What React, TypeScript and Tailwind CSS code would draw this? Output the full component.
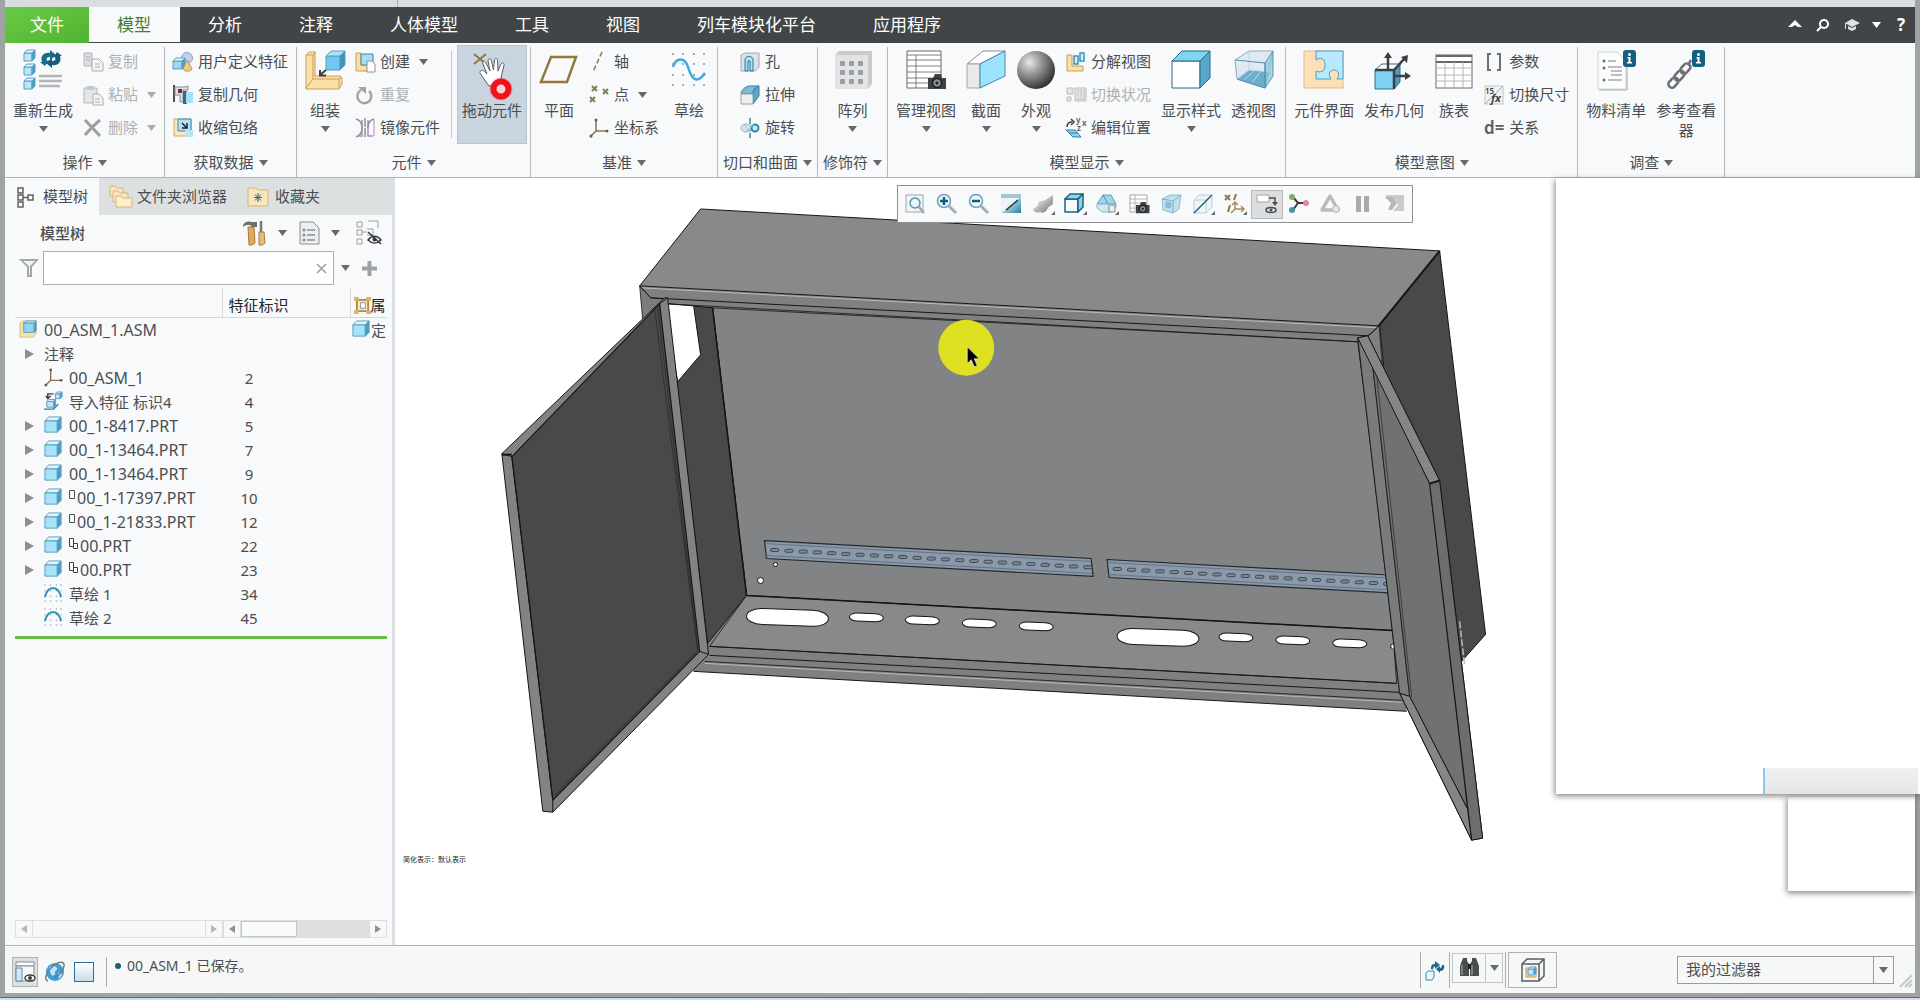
import type { ReactNode } from "react";
import clsx from "clsx";

/* ---------- small drawing helpers ---------- */

interface IconProps {
  size?: number;
  box?: number;
  children: ReactNode;
}

function Icon({ size = 20, box = size, children }: IconProps) {
  return (
    <svg
      width={size}
      height={size}
      viewBox={`0 0 ${box} ${box}`}
      fill="none"
      className="block shrink-0 overflow-visible"
      aria-hidden="true"
    >
      {children}
    </svg>
  );
}

interface CubeProps {
  x: number;
  y: number;
  w: number;
  h: number;
  d: number;
  front?: string;
  top?: string;
  side?: string;
  stroke?: string;
}

function Cube({
  x,
  y,
  w,
  h,
  d,
  front = "#b9e8fb",
  top = "#e3f6fd",
  side = "#4f9cc4",
  stroke = "#5a9dbf",
}: CubeProps) {
  return (
    <g stroke={stroke} strokeLinejoin="round">
      <path d={`M${x} ${y + d}h${w - d}v${h - d}h${d - w}z`} fill={front} />
      <path d={`M${x} ${y + d}l${d} ${-d}h${w - d}l${-d} ${d}z`} fill={top} />
      <path d={`M${x + w - d} ${y + d}l${d} ${-d}v${h - d}l${-d} ${d}z`} fill={side} />
    </g>
  );
}

function Caret({ className = "text-[#666a6d]" }: { className?: string }) {
  return (
    <svg width="9" height="6" viewBox="0 0 9 6" className={clsx("shrink-0", className)} aria-hidden="true">
      <path d="M0 0h9L4.500 6z" fill="currentColor" />
    </svg>
  );
}

function InfoBadge({ x }: { x: number }) {
  return (
    <g>
      <rect x={x} y="0" width="13" height="17" rx="3" fill="#136080" />
      <path d="M5 7h3v5h1.500v1.500h-5V12H6V8.500H5z" transform={`translate(${x - 0.5} 0)`} fill="#fff" />
      <circle cx={x + 6.5} cy="4.500" r="1.500" fill="#fff" />
    </g>
  );
}

function Camera({ x, y }: { x: number; y: number }) {
  return (
    <g transform={`translate(${x} ${y})`}>
      <path d="M0 4h5l2-4h6l1 4h4v11H0z" fill="#3f4245" />
      <circle cx="9" cy="9" r="4.500" fill="#8a8d90" stroke="#1c1d1f" strokeWidth="1.500" />
      <circle cx="9" cy="9" r="1.500" fill="#222" />
    </g>
  );
}

/* ---------- large ribbon icons, 40 px box ---------- */

const large = {
  regenerate: (
    <>
      <Cube x={1} y={0} w={11} h={11} d={3} />
      <Cube x={1} y={14} w={11} h={11} d={3} />
      <Cube x={1} y={28} w={11} h={11} d={3} />
      <path d="M19 12c-2-6 2-10 8-9V0l6 5-6 5V7c-3 0-4 1-3 4l2-1-4 6-5-4z" fill="#1c6a8b" />
      <path d="M37 6c2 6-2 10-8 9v3l-6-5 6-5v3c3 0 4-1 3-4l-2 1 4-6 5 4z" fill="#135c7e" />
      <path d="M16 26h23M16 31h23M16 36h21" stroke="#b2b5b7" strokeWidth="2.500" />
    </>
  ),
  assemble: (
    <>
      <path d="M1 5l3-3h6v24h25l2 2v6l-3 5H1z" fill="#fbe0a6" stroke="#c69f57" />
      <path d="M1 5h7v24l-7 9M8 29h26l3-2M8 5l3-3M34 29v9" stroke="#c69f57" />
      <Cube x={21} y={1} w={19} h={19} d={5} front="#6fc8ef" top="#a9e2f8" side="#3f94bf" />
      <path d="M21 20l-6 5m0-5v5.500h6" stroke="#3d4144" strokeWidth="2" />
    </>
  ),
  drag: (
    <>
      <path d="M2 4l12 10M14 4L2 14" stroke="#8b7a3f" strokeWidth="2" />
      <path
        d="M17 36l-7-10c-2-3-3-4-1-5 2-2 4 1 6 3L11 14c-1-3 2-4 3-1l4 8-2-10c0-3 3-3 3.500 0l2 9 1-10c0-2 3-2 3 0l.500 11 3-7c1-2 4-1 3 1l-3 13-2 8z"
        fill="#fff"
        stroke="#5a5d60"
      />
      <circle cx="29" cy="39" r="7.500" fill="#f4d4d4" stroke="#f3101c" strokeWidth="6" />
      <circle cx="29" cy="39" r="11" stroke="#f3101c" strokeOpacity=".35" />
    </>
  ),
  plane: <path d="M12 7h25l-9 25H2z" stroke="#94793f" strokeWidth="2.500" />,
  sketch: (
    <>
      {[4, 14, 25, 35].map((y) =>
        [4, 14, 25, 35].map((x) => <circle key={`${x}-${y}`} cx={x} cy={y} r="1" fill="#8e9296" />),
      )}
      <path d="M4 17c3-10 12-10 15 0s8 19 17 6" stroke="#3fa9e0" strokeWidth="2.500" />
    </>
  ),
  pattern: (
    <>
      <path d="M2 5l4-4h33v33l-4 5H2z" fill="#c9cbcd" />
      <rect x="2" y="5" width="33" height="34" rx="1" fill="#e3e4e5" />
      {[11, 20, 29].map((y) =>
        [7, 16, 25].map((x) => <rect key={`${x}-${y}`} x={x} y={y} width="5" height="5" rx="1" fill="#9b9ea1" />),
      )}
    </>
  ),
  manageViews: (
    <>
      <path d="M1 1h34v37H1z" fill="#fff" stroke="#66696c" />
      <path d="M1 5h34M1 10h34M1 16h34M1 22h34M1 28h34M1 33h34M10 5v33" stroke="#7b7e81" />
      <Camera x={22} y={24} />
    </>
  ),
  section: (
    <>
      <path d="M1 14L17 1h22L14 14z" fill="#fff" stroke="#8a8d90" />
      <path d="M1 14h13v24H1z" fill="#e9eaeb" stroke="#a2a5a8" />
      <path d="M14 14L39 1v25L14 38z" fill="#9be4fb" stroke="#4387a6" />
    </>
  ),
  appearance: (
    <>
      <radialGradient id="ball" cx=".33" cy=".3" r=".75">
        <stop offset="0" stopColor="#e8e8e8" />
        <stop offset=".4" stopColor="#9a9b9c" />
        <stop offset="1" stopColor="#2d2e2f" />
      </radialGradient>
      <circle cx="20" cy="20" r="19" fill="url(#ball)" />
    </>
  ),
  displayStyle: <Cube x={1} y={1} w={38} h={37} d={10} front="#fff" top="#7fd6f3" side="#5aa7cb" stroke="#256a88" />,
  perspective: (
    <>
      <path d="M1 10L15 1h24l-8 37-28-9z" fill="#dfe9f1" stroke="#8fa9b8" />
      <path d="M3 29l12-9 21 2-5 16z" fill="#6aaecb" />
      <path d="M15 1v19M3 29l12-9 22 2M10 30l10-9M18 33l8-11" stroke="#bcd8e5" />
      <path d="M31 13l8-12v25l-8 12z" fill="#8dc3da" fillOpacity=".7" stroke="#4f93b0" />
      <path d="M1 10l30 3M31 13v25M3 29l28 9" stroke="#4f93b0" />
    </>
  ),
  interface: (
    <>
      <rect x="0" y="1" width="39" height="37" fill="#fde0b8" stroke="#e0b989" />
      <path
        d="M12 1h27v28h-6c3-4 2-9-3-9s-6 5-3 9H12V21c4 2 9 1 9-6s-5-8-9-5z"
        fill="#b8e9fd"
        stroke="#4e9cc2"
      />
    </>
  ),
  publish: (
    <>
      <path d="M1 20l7-6h19l-6 6z" fill="#fff" stroke="#2d6f8e" />
      <path d="M20 20l6-6v18l-6 7z" fill="#4c9cc0" stroke="#2d6f8e" />
      <path d="M1 20h19v19H1z" fill="#7fd1f2" stroke="#2d6f8e" />
      <path d="M1 20h19v19M14 20V5M20 20L31 8M20 26h13" stroke="#3c4043" strokeWidth="2.500" />
      <path d="M14 2l4 6h-8zM34 5l-1 8-6-6zM37 26l-6 4v-8z" fill="#3c4043" />
    </>
  ),
  familyTable: (
    <>
      <rect x="2" y="5" width="36" height="33" fill="#fff" stroke="#66696c" />
      <path d="M2 6h36M2 12h36" stroke="#66696c" strokeWidth="2" />
      <path d="M2 18h36M2 25h36M2 31h36M11 12v26M20 12v26M29 12v26" stroke="#b3b5b7" />
    </>
  ),
  bom: (
    <>
      <path d="M2 2h19l9 9v28H2z" fill="#fcfcfc" stroke="#d0d2d4" />
      <path d="M3 40h28V13" stroke="#a9abad" />
      <path d="M12 11h8M12 17h14M15 21h11M15 25h11M12 30h14" stroke="#a6a8aa" strokeWidth="1.500" />
      <circle cx="8" cy="11" r="1.500" fill="#3d7f96" />
      <circle cx="8" cy="18" r="1.500" fill="#3d7f96" />
      <circle cx="8" cy="30" r="1.500" fill="#3d7f96" />
      <InfoBadge x={27} />
    </>
  ),
  references: (
    <>
      <g stroke="#6d7073" strokeWidth="2.500">
        <rect x="-5" y="-3.500" width="11" height="7" rx="3" transform="translate(7 33) rotate(-48)" />
        <rect x="-5" y="-3.500" width="11" height="7" rx="3" transform="translate(13 26) rotate(-48)" />
        <rect x="-5" y="-3.500" width="11" height="7" rx="3" transform="translate(19 19) rotate(-48)" />
        <path d="M22 15l3-5" />
      </g>
      <InfoBadge x={26} />
    </>
  ),
};

/* ---------- small ribbon and tree icons, 20 px box ---------- */

const part = <Cube x={1} y={1} w={17} h={16} d={4} front="#a5e3fb" top="#dff5fd" side="#4b9dc6" />;
const csys = (
  <>
    <path d="M7 2v11h12M7 13l-6 6" stroke="#8a7350" strokeWidth="1.500" />
    <circle cx="7" cy="2" r="1.500" fill="#5d5f61" />
    <circle cx="18" cy="13" r="1.500" fill="#5d5f61" />
    <circle cx="2" cy="18" r="1.500" fill="#5d5f61" />
  </>
);

const small = {
  copy: (
    <>
      <path d="M1 1h8v13H1z" fill="#dcdee0" stroke="#b4b7ba" />
      <path d="M9 7h7l4 4v8H9z" fill="#f3f4f5" stroke="#a9acaf" />
      <path d="M12 12h5M12 15h5M3 5h4M3 8h4" stroke="#a9acaf" />
    </>
  ),
  paste: (
    <>
      <path d="M1 3h13v15H1z" fill="#e3e5e6" stroke="#b4b7ba" />
      <path d="M4 1h7v4H4z" fill="#c5c8ca" />
      <path d="M10 9h6l4 4v7H10z" fill="#f3f4f5" stroke="#a9acaf" />
      <path d="M12 14h5M12 17h5" stroke="#a9acaf" />
    </>
  ),
  remove: <path d="M2 2l15 16M17 2C11 7 6 12 2 17" stroke="#9d9fa1" strokeWidth="3" />,
  userFeature: (
    <>
      <circle cx="14" cy="6" r="5.500" fill="#c3d0e6" stroke="#8c9fc4" />
      <Cube x={0} y={6} w={12} h={11} d={3} front="#9bdaf5" />
      <path d="M14 8l5 9c-2 3-7 3-9 0z" fill="#ecca8d" stroke="#b99353" />
    </>
  ),
  copyGeom: (
    <>
      <path d="M1 0v17" stroke="#4d5053" strokeWidth="2" />
      <path d="M2 2h10l3-1v4h-5v12H7V10H2z" fill="#dfe1e3" stroke="#8a8d90" />
      <path d="M5 4h4v4H5z" fill="#6d2f35" />
      <path d="M10 6h4v13h-4z" fill="#1f7396" />
      <path d="M13 7h7v11h-7z" fill="#a6e1fa" />
    </>
  ),
  shrinkwrap: (
    <>
      <path d="M1 1h17v17H1z" fill="#fbe6bb" stroke="#cfa962" />
      <path d="M5 1h13v12H5z" fill="#b4e0f1" stroke="#3c86a8" />
      <path d="M9 5l5 5m0-5v5H9" stroke="#222" strokeWidth="1.500" />
      <path d="M12 12h8v7h-8z" fill="#b5e6fa" />
    </>
  ),
  create: (
    <>
      <path d="M1 1h5v12h11v6H1z" fill="#fbe0a6" stroke="#c69f57" />
      <path d="M6 2h12v11H6z" fill="#a9def3" stroke="#3c86a8" />
      <path d="M12 9h5l3 3v8h-8z" fill="#fff" stroke="#8e9194" />
    </>
  ),
  repeat: (
    <>
      <path d="M6 5a7 7 0 1 0 8 1" stroke="#a2a4a6" strokeWidth="2.500" />
      <path d="M3 2h8v7z" fill="#a2a4a6" />
    </>
  ),
  mirror: (
    <>
      <path d="M10 0v20" stroke="#5a5d60" strokeDasharray="9 1" />
      <path d="M1 1c4 1 6 5 6 9s-1 7-6 9" stroke="#8d9094" strokeWidth="1.500" />
      <path d="M7 2v16H2M13 2v16h5" stroke="#a98dbf" strokeWidth="1.500" />
      <path d="M19 1c-4 1-6 5-6 9" stroke="#8d9094" strokeWidth="1.500" />
      <path d="M19 2v16" stroke="#a98dbf" />
    </>
  ),
  axis: <path d="M13 0L4 20" stroke="#8a7a45" strokeWidth="1.500" strokeDasharray="5 2.500" />,
  points: (
    <path
      d="M3 1l5 5m0-5L3 6M14 4l5 5m0-5l-5 5M1 12l5 5m0-5l-5 5"
      stroke="#8a7a55"
      strokeWidth="2"
    />
  ),
  csys,
  hole: (
    <>
      <path d="M1 3l4-2h14v14l-4 4H1z" fill="#dfe2e4" stroke="#a4a7aa" />
      <path d="M5 19V8c0-5 8-5 8 0v11h-3V9H8v10z" fill="#a5dff5" stroke="#27799c" />
    </>
  ),
  extrude: (
    <>
      <path d="M1 9c1-5 4-7 8-8h10c-4 1-6 4-6 8z" fill="#7dbdd6" stroke="#3a7f9d" />
      <path d="M13 9c0-4 2-7 6-8v10l-6 8z" fill="#57a9cb" stroke="#3a7f9d" />
      <path d="M1 9h12v10H1z" fill="#eceeef" stroke="#9b9ea1" />
    </>
  ),
  revolve: (
    <>
      <path d="M10 0v20" stroke="#2f89ad" strokeWidth="1.500" strokeDasharray="6 1.500" />
      <ellipse cx="6" cy="10" rx="5" ry="4" fill="#dbe3e7" stroke="#9bb3be" />
      <circle cx="15" cy="10" r="3.500" fill="#c3e9f7" stroke="#2f89ad" strokeWidth="2" />
      <path d="M4 6l5 8M6 14l8-8" stroke="#8fc6dc" />
    </>
  ),
  explode: (
    <>
      <path d="M1 3h5v11h11v5H1z" fill="#fbe0a6" stroke="#c69f57" />
      <path d="M8 4h4v8H8zM14 1h4v8h-4z" fill="#d5f0fb" stroke="#3c93bf" strokeWidth="1.500" />
    </>
  ),
  toggleStatus: (
    <>
      <path d="M1 3h6v6H1zM1 12h4v4H1zM9 3h11v13H9z" fill="#e4e5e6" stroke="#bbbdbf" />
      <path d="M12 4v8M15 4v8M18 4v11M10 14h8" stroke="#bbbdbf" />
    </>
  ),
  editPosition: (
    <>
      <path d="M0 12h9l6 7H7z" fill="#8fd4f0" stroke="#2f7ea1" />
      <path d="M3 15h9" stroke="#2f7ea1" />
      <path d="M1 9c0-4 2-5 5-5M5 1l3 3-3 3" stroke="#3c4043" strokeWidth="1.500" />
      <text x="10" y="5" fontSize="8" fontWeight="600" fill="#55585b">y</text>
      <text x="16" y="8" fontSize="8" fontWeight="600" fill="#55585b">x</text>
      <text x="11" y="13" fontSize="8" fontWeight="600" fill="#55585b">z</text>
    </>
  ),
  params: <path d="M7 2H4v16h3M13 2h3v16h-3" stroke="#6d7073" strokeWidth="2" />,
  switchDims: (
    <>
      <path d="M1 1h18v18H1z" fill="#f1f2f2" stroke="#c4c6c8" />
      <path d="M1 19L19 1" stroke="#a5a8aa" />
      <text x="1" y="9" fontSize="8" fontWeight="600" fill="#3c4043">15</text>
      <text x="7" y="17" fontSize="11" fontStyle="italic" fontWeight="700" fill="#3c4043">fx</text>
    </>
  ),
  relations: (
    <text x="0" y="16" fontSize="17" fontWeight="600" fill="#5a5d60">d=</text>
  ),
  part,
  assembly: (
    <>
      <path d="M1 3l3-2h14v13l-3 4H1z" fill="#fbe0a6" stroke="#d9bd85" />
      <Cube x={5} y={1} w={13} h={12} d={2} front="#8fd4f0" />
    </>
  ),
  importFeature: (
    <>
      <Cube x={12} y={0} w={7} h={7} d={2} />
      <path d="M0 18h10l5-5" stroke="#2f7ea1" strokeWidth="1.500" />
      <Cube x={3} y={8} w={9} h={8} d={2} />
      <path d="M4 6V2h6M2 4l2 3 3-3" stroke="#3c4043" strokeWidth="1.500" />
    </>
  ),
  sketchArc: (
    <>
      {[1, 7, 13, 18].map((y) =>
        [1, 7, 13, 18].map((x) => <circle key={`${x}-${y}`} cx={x} cy={y} r=".8" fill="#a3a6a9" />),
      )}
      <path d="M1 14c3-13 14-13 17 0" stroke="#2e93b8" strokeWidth="2" />
    </>
  ),
};

/* ---------- graphics toolbar icons, 22 px box ---------- */

const corner = <path d="M23 18v4h-4z" fill="#666" />;

const view: { name: string; icon: ReactNode; active?: boolean; disabled?: boolean }[] = [
  {
    name: "重新调整",
    icon: (
      <>
        <path d="M2 2h17v17H2z" fill="#f1f5f7" stroke="#a3a6a9" />
        <circle cx="11" cy="10" r="5" fill="#e9f6fc" stroke="#5595ae" strokeWidth="1.500" />
        <path d="M15 14l5 6" stroke="#a3a6a9" strokeWidth="2.500" />
      </>
    ),
  },
  {
    name: "放大",
    icon: (
      <>
        <circle cx="8" cy="8" r="6.500" fill="#eef8fc" stroke="#6ea3b8" strokeWidth="1.500" />
        <path d="M8 4v8M4 8h8" stroke="#125c7c" strokeWidth="2.500" />
        <path d="M13 13l7 7" stroke="#a9acae" strokeWidth="3" />
      </>
    ),
  },
  {
    name: "缩小",
    icon: (
      <>
        <circle cx="8" cy="8" r="6.500" fill="#eef8fc" stroke="#6ea3b8" strokeWidth="1.500" />
        <path d="M4 8h8" stroke="#125c7c" strokeWidth="2.500" />
        <path d="M13 13l7 7" stroke="#a9acae" strokeWidth="3" />
      </>
    ),
  },
  {
    name: "重画",
    icon: (
      <>
        <linearGradient id="repaint" x1="0" y1="0" x2="1" y2="1">
          <stop offset=".4" stopColor="#bcdde6" />
          <stop offset="1" stopColor="#23809f" />
        </linearGradient>
        <path d="M1 1h20v19H1z" fill="#eef2f4" />
        <path d="M1 1h20v4H1z" fill="#a4c6d0" />
        <path d="M1 20h20V3L10 14z" fill="url(#repaint)" />
        <path d="M6 17L18 7" stroke="#123a4a" strokeWidth="1.500" />
      </>
    ),
  },
  {
    name: "渲染选项",
    icon: (
      <>
        <linearGradient id="shade" x1="0" y1="0" x2="1" y2="1">
          <stop offset=".2" stopColor="#e3e4e5" />
          <stop offset="1" stopColor="#6d7073" />
        </linearGradient>
        <path d="M1 16c1-2 4-1 5-4 0-3 2-5 5-4 3-1 6-4 10-6v8c-1 3-4 3-5 5-2 4-5 6-8 4-3 1-6 1-7-3z" fill="url(#shade)" />
        {corner}
      </>
    ),
  },
  {
    name: "显示样式",
    icon: (
      <>
        <g strokeWidth="1.500">
          <Cube x={1} y={1} w={18} h={18} d={5} front="#f6fafc" top="#8fd8f2" side="#8fd0e8" stroke="#1b6480" />
        </g>
        {corner}
      </>
    ),
  },
  {
    name: "已保存方向",
    icon: (
      <>
        <path d="M1 11l6-9h8l5 9z" fill="#9fd5ea" stroke="#5b9cb8" />
        <path d="M1 11h19v3l-5 5H6l-5-4z" fill="#cfe8f2" stroke="#86b6ca" />
        <path d="M7 2l5 9" stroke="#4b8ca8" />
        <path d="M13 12h6v7h-6z" fill="#eee" stroke="#888" />
        {corner}
      </>
    ),
  },
  {
    name: "视图管理器",
    icon: (
      <>
        <path d="M2 2h17v17H2z" fill="#fff" stroke="#a3a6a9" />
        <path d="M2 6h17M2 10h17M2 15h17M7 2v17" stroke="#b3b6b8" />
        <g transform="translate(8 9) scale(.75)">
          <Camera x={0} y={0} />
        </g>
      </>
    ),
  },
  {
    name: "透视图",
    icon: (
      <>
        <path d="M2 6l8-4h11l-2 14-6 4-10-3z" fill="#bfdfec" stroke="#8fbdcf" />
        <path d="M2 6l11 2 8-6M13 8v12" stroke="#7fb2c8" />
        <path d="M6 9l5 1-1 5-4-1z" fill="#8fc3d8" stroke="#7fb2c8" />
      </>
    ),
  },
  {
    name: "截面",
    icon: (
      <>
        <path d="M2 7l5-5h13v12l-6 6H2z" fill="#eef5f9" stroke="#b8cfda" />
        <path d="M2 7h12v13M14 7l6-5" stroke="#b8cfda" />
        <path d="M2 20L20 2" stroke="#2b5f7a" strokeWidth="1.500" />
        {corner}
      </>
    ),
  },
  {
    name: "基准显示过滤器",
    icon: (
      <>
        <path d="M1 2l5 5m0-5L1 7M12 1l-2 6M6 12l-2 7" stroke="#8a7a3f" strokeWidth="2" />
        <path d="M11 9v7h9M11 16l-4 4M8 12l3-3 3 3M17 13l3 3-3 3" stroke="#a68c58" strokeWidth="1.500" />
        {corner}
      </>
    ),
  },
  {
    name: "注释显示",
    active: true,
    icon: (
      <>
        <path d="M1 2h12v7H1z" fill="#fff" stroke="#a0a3a5" />
        <path d="M13 5h6v5" stroke="#4a4d50" strokeWidth="1.500" />
        <path d="M16 9h6l-3 4z" fill="#4a4d50" />
        <ellipse cx="15" cy="17" rx="5" ry="2.500" stroke="#4a4d50" strokeWidth="1.500" />
        <circle cx="15" cy="17" r="1.500" fill="#4a4d50" />
      </>
    ),
  },
  {
    name: "旋转中心",
    icon: (
      <>
        <path d="M10 10L5 4M10 10h8M10 10l-5 7" stroke="#3a3d40" strokeWidth="2" />
        <circle cx="4" cy="4" r="3" fill="#7fae6c" />
        <circle cx="18" cy="10" r="3" fill="#e58a8f" />
        <circle cx="4" cy="17" r="3" fill="#4c93a6" />
      </>
    ),
  },
  {
    name: "仿真",
    disabled: true,
    icon: (
      <>
        <path d="M10 3l8 14H2z" stroke="#b9bbbd" strokeWidth="3.500" strokeLinejoin="round" />
        <circle cx="16" cy="16" r="3.500" fill="#e3e4e5" stroke="#b3b5b7" />
      </>
    ),
  },
  { name: "暂停", disabled: true, icon: <path d="M4 3h5v16H4zM12 3h5v16h-5z" fill="#a9abad" /> },
  {
    name: "继续",
    disabled: true,
    icon: (
      <>
        <path d="M2 2h18v16H9l5-6-3-6H2z" fill="#c9cbcd" />
        <path d="M1 4h8l4 6-5 7H4l3-7z" fill="#b5b7b9" />
      </>
    ),
  },
];

/* ---------- ribbon ---------- */

interface BigButtonProps {
  icon: ReactNode;
  label: string;
  caret?: boolean;
  active?: boolean;
}

function BigButton({ icon, label, caret, active }: BigButtonProps) {
  return (
    <button
      type="button"
      className={clsx(
        "flex h-[99px] shrink-0 flex-col items-center px-[5px] pt-[5px]",
        active && "bg-[#c8d5e0] shadow-[inset_0_0_0_1px_#b5c5d3]",
      )}
    >
      <Icon size={40}>{icon}</Icon>
      <span className="mt-2.5 max-w-[60px] text-[15px] leading-5">{label}</span>
      {caret && <Caret className="mt-1.5 text-[#666a6d]" />}
    </button>
  );
}

interface SmallButtonProps {
  icon: ReactNode;
  label: string;
  caret?: boolean;
  disabled?: boolean;
}

function SmallButton({ icon, label, caret, disabled }: SmallButtonProps) {
  return (
    <button
      type="button"
      disabled={disabled}
      className={clsx("flex h-[33px] items-center gap-[5px] px-[5px]", disabled && "text-[#adb0b3]")}
    >
      <Icon>{icon}</Icon>
      <span className="text-[15px] whitespace-nowrap">{label}</span>
      {caret && <Caret className={disabled ? "ml-1 text-[#a9acaf]" : "ml-1 text-[#666a6d]"} />}
    </button>
  );
}

function Column({ children }: { children: ReactNode }) {
  return <div className="flex shrink-0 flex-col items-start">{children}</div>;
}

function Group({ label, children }: { label: string; children: ReactNode }) {
  return (
    <section className="flex shrink-0">
      <div className="flex flex-col items-center px-[3px] pt-0.5">
        <div className="flex">{children}</div>
        <button type="button" className="mt-1 flex h-[29px] items-center gap-[5px] px-0.5 text-[15px]">
          {label}
          <Caret />
        </button>
      </div>
      <div className="mt-1 w-px bg-[#b5b7b9]" />
    </section>
  );
}

function Ribbon() {
  return (
    <div className="flex h-[135px] shrink-0 overflow-hidden border-b border-[#b3b6b8] bg-[#f8f9fb]">
      <Group label="操作">
        <BigButton icon={large.regenerate} label="重新生成" caret />
        <Column>
          <SmallButton icon={small.copy} label="复制" disabled />
          <SmallButton icon={small.paste} label="粘贴" caret disabled />
          <SmallButton icon={small.remove} label="删除" caret disabled />
        </Column>
      </Group>
      <Group label="获取数据">
        <Column>
          <SmallButton icon={small.userFeature} label="用户定义特征" />
          <SmallButton icon={small.copyGeom} label="复制几何" />
          <SmallButton icon={small.shrinkwrap} label="收缩包络" />
        </Column>
      </Group>
      <Group label="元件">
        <BigButton icon={large.assemble} label="组装" caret />
        <Column>
          <SmallButton icon={small.create} label="创建" caret />
          <SmallButton icon={small.repeat} label="重复" disabled />
          <SmallButton icon={small.mirror} label="镜像元件" />
        </Column>
        <div className="my-1.5 mr-[5px] ml-1.5 w-px bg-[#c3c5c7]" />
        <BigButton icon={large.drag} label="拖动元件" active />
      </Group>
      <Group label="基准">
        <BigButton icon={large.plane} label="平面" />
        <Column>
          <SmallButton icon={small.axis} label="轴" />
          <SmallButton icon={small.points} label="点" caret />
          <SmallButton icon={small.csys} label="坐标系" />
        </Column>
        <BigButton icon={large.sketch} label="草绘" />
      </Group>
      <Group label="切口和曲面">
        <Column>
          <SmallButton icon={small.hole} label="孔" />
          <SmallButton icon={small.extrude} label="拉伸" />
          <SmallButton icon={small.revolve} label="旋转" />
        </Column>
      </Group>
      <Group label="修饰符">
        <div className="px-1">
          <BigButton icon={large.pattern} label="阵列" caret />
        </div>
      </Group>
      <Group label="模型显示">
        <BigButton icon={large.manageViews} label="管理视图" caret />
        <BigButton icon={large.section} label="截面" caret />
        <BigButton icon={large.appearance} label="外观" caret />
        <Column>
          <SmallButton icon={small.explode} label="分解视图" />
          <SmallButton icon={small.toggleStatus} label="切换状况" disabled />
          <SmallButton icon={small.editPosition} label="编辑位置" />
        </Column>
        <BigButton icon={large.displayStyle} label="显示样式" caret />
        <div className="pr-px">
          <BigButton icon={large.perspective} label="透视图" />
        </div>
      </Group>
      <Group label="模型意图">
        <BigButton icon={large.interface} label="元件界面" />
        <BigButton icon={large.publish} label="发布几何" />
        <BigButton icon={large.familyTable} label="族表" />
        <Column>
          <SmallButton icon={small.params} label="参数" />
          <SmallButton icon={small.switchDims} label="切换尺寸" />
          <SmallButton icon={small.relations} label="关系" />
        </Column>
      </Group>
      <Group label="调查">
        <BigButton icon={large.bom} label="物料清单" />
        <BigButton icon={large.references} label="参考查看器" />
      </Group>
    </div>
  );
}

const tabs = ["分析", "注释", "人体模型", "工具", "视图", "列车模块化平台", "应用程序"];

function TabBar() {
  return (
    <nav className="flex h-9 shrink-0 items-stretch bg-[#414548] text-[17px] text-white">
      <button type="button" className="bg-linear-to-br from-[#68cb43] to-[#52b233] px-[25px]">
        文件
      </button>
      <button type="button" className="mb-px bg-[#f8f9fb] pr-[29px] pl-7 text-[#44802a]">
        模型
      </button>
      <div className="flex gap-px">
        {tabs.map((tab) => (
          <button key={tab} type="button" className="px-7">
            {tab}
          </button>
        ))}
      </div>
      <div className="ml-auto flex items-center gap-3.5 pr-2">
        <button type="button" aria-label="最小化功能区">
          <Icon size={14}>
            <path d="M0 9l7-7 7 7h-4L7 7 4 9z" fill="#fff" />
          </Icon>
        </button>
        <button type="button" aria-label="搜索">
          <Icon size={14}>
            <circle cx="8" cy="6" r="4" stroke="#fff" strokeWidth="2" />
            <path d="M5 9l-4 4" stroke="#fff" strokeWidth="2" />
          </Icon>
        </button>
        <button type="button" aria-label="学习" className="flex items-center gap-3">
          <Icon size={16}>
            <path d="M8 2l8 4-8 4-7-4z" fill="#dfe1e2" />
            <path d="M4 9l4 2 4-2v3l-4 2-4-2zM1 6h1v6H1z" fill="#dfe1e2" />
          </Icon>
          <Caret className="text-white" />
        </button>
        <button type="button" aria-label="帮助" className="w-3 text-[17px] font-bold">
          ?
        </button>
      </div>
    </nav>
  );
}

/* ---------- model tree ---------- */

interface TreeItem {
  label: string;
  id?: string;
  icon?: ReactNode;
  expandable?: boolean;
  depth: number;
  mark?: "flex" | "link";
}

const tree: TreeItem[] = [
  { label: "00_ASM_1.ASM", icon: small.assembly, depth: 0 },
  { label: "注释", expandable: true, depth: 0 },
  { label: "00_ASM_1", id: "2", icon: small.csys, depth: 1 },
  { label: "导入特征 标识4", id: "4", icon: small.importFeature, depth: 1 },
  { label: "00_1-8417.PRT", id: "5", icon: small.part, expandable: true, depth: 1 },
  { label: "00_1-13464.PRT", id: "7", icon: small.part, expandable: true, depth: 1 },
  { label: "00_1-13464.PRT", id: "9", icon: small.part, expandable: true, depth: 1 },
  { label: "00_1-17397.PRT", id: "10", icon: small.part, expandable: true, depth: 1, mark: "flex" },
  { label: "00_1-21833.PRT", id: "12", icon: small.part, expandable: true, depth: 1, mark: "flex" },
  { label: "00.PRT", id: "22", icon: small.part, expandable: true, depth: 1, mark: "link" },
  { label: "00.PRT", id: "23", icon: small.part, expandable: true, depth: 1, mark: "link" },
  { label: "草绘 1", id: "34", icon: small.sketchArc, depth: 1 },
  { label: "草绘 2", id: "45", icon: small.sketchArc, depth: 1 },
];

function TreeRow({ item }: { item: TreeItem }) {
  return (
    <tr className="h-6">
      <td className="p-0">
        <div className="flex items-center">
          {item.depth === 0 && item.icon ? (
            <span className="w-[29px] pl-1">
              <Icon size={19} box={20}>
                {item.icon}
              </Icon>
            </span>
          ) : (
            <span className="w-[29px] pl-2.5">
              {item.expandable && (
                <svg width="9" height="10" viewBox="0 0 9 10" aria-hidden="true">
                  <path d="M0 0l9 5-9 5z" fill="#8a8d8f" />
                </svg>
              )}
            </span>
          )}
          {item.depth === 1 && (
            <span className="w-[25px]">
              <Icon size={19} box={20}>
                {item.icon}
              </Icon>
            </span>
          )}
          {item.mark === "flex" && (
            <svg width="8" height="16" viewBox="0 0 8 16" aria-hidden="true">
              <path d="M.500 .500h5v8h-5z" fill="none" stroke="#4d5053" />
            </svg>
          )}
          {item.mark === "link" && (
            <svg width="11" height="16" viewBox="0 0 11 16" aria-hidden="true">
              <path d="M.500 .500h4v8h-4zM4.500 5.500h4v5h-4v-2" fill="none" stroke="#3d4043" />
            </svg>
          )}
          <span className={clsx("leading-6 whitespace-nowrap", /^\d/.test(item.label) ? "text-[16px]" : "text-[15px]")}>
            {item.label}
          </span>
        </div>
      </td>
      <td className="p-0 text-[15px]">
        <span className="block w-[54px] text-center leading-6">{item.id}</span>
      </td>
      <td className="p-0 pl-0.5">
        {item.label === "00_ASM_1.ASM" && (
          <div className="flex items-center text-[15px] leading-6 whitespace-nowrap">
            <Icon size={19} box={20}>
              {small.part}
            </Icon>
            定
          </div>
        )}
      </td>
    </tr>
  );
}

function Scrollbar({ thumb }: { thumb?: boolean }) {
  return (
    <div className="flex h-[18px] flex-1 border border-[#dcdfe0] bg-[#f7f9f9]">
      <button type="button" aria-label="向左滚动" className="grid w-[17px] place-items-center border-r border-[#dcdfe0]">
        <svg width="6" height="8" viewBox="0 0 6 8">
          <path d="M6 0v8L0 4z" fill={thumb ? "#8f9294" : "#b5b8ba"} />
        </svg>
      </button>
      <div className={clsx("flex flex-1", thumb && "bg-[#dddfe1]")}>
        {thumb && <div className="w-14 border border-[#c2c5c7] bg-[#f9fafb]" />}
      </div>
      <button type="button" aria-label="向右滚动" className="grid w-[17px] place-items-center border-l border-[#dcdfe0]">
        <svg width="6" height="8" viewBox="0 0 6 8">
          <path d="M0 0v8l6-4z" fill={thumb ? "#8f9294" : "#b5b8ba"} />
        </svg>
      </button>
    </div>
  );
}

function ModelTree() {
  return (
    <aside className="flex w-[390px] shrink-0 flex-col border-r-[3px] border-[#dcdfe3] bg-[#f8f9fb]">
      <div className="flex h-[37px] shrink-0 bg-[#dde0e1] text-[15px]">
        <button type="button" className="flex w-[94px] items-center gap-2 bg-[#f8f9fb] pl-3">
          <Icon size={18}>
            <path
              d="M1 0h5v5H1zM1 7h5v5H1zM11 7h5v5h-5zM1 14h5v5H1zM6 9.500h5"
              stroke="#5d6063"
              strokeWidth="1.500"
            />
          </Icon>
          模型树
        </button>
        <button type="button" className="flex items-center gap-[5px] pl-2.5">
          <Icon size={23}>
            <path d="M1 1h5l2 2h6v8H1z" fill="#fbe6bb" stroke="#d3b47c" />
            <path d="M4 6h5l2 2h8v9H4z" fill="#fbe6bb" stroke="#d3b47c" />
            <path d="M7 11h5l2 2h9v9H7z" fill="#fdeecb" stroke="#d3b47c" />
          </Icon>
          文件夹浏览器
        </button>
        <button type="button" className="flex items-center gap-1.5 pl-5">
          <Icon size={22}>
            <path d="M1 2h8l2 2h10v16H1z" fill="#fbe6bb" stroke="#d3b47c" />
            <path d="M11 7v9M7 11.500h8M8 8.500l6 6M14 8.500l-6 6" stroke="#1f6a88" />
          </Icon>
          收藏夹
        </button>
      </div>

      <div className="flex h-9 shrink-0 items-center pr-2.5 pl-[35px]">
        <h2 className="flex-1 text-[15px] font-medium">模型树</h2>
        <button type="button" aria-label="设置" className="flex items-center gap-3">
          <Icon size={24}>
            <path d="M1 4c2-4 6-4 9-3h5v5h-5L8 4C5 4 3 4 1 6z" fill="#6d7073" />
            <path d="M6 6h6l1 16-3 2H7z" fill="#e0a95e" stroke="#a87837" />
            <path d="M19 0v11" stroke="#77797c" strokeWidth="2.500" />
            <path d="M17 11h5l1 11-3 2h-3z" fill="#e8bd7b" stroke="#a87837" />
          </Icon>
          <Caret />
        </button>
        <button type="button" aria-label="显示" className="ml-3 flex items-center gap-2">
          <Icon size={24}>
            <path d="M1 1h13l6 6v16H1z" fill="#eceef0" stroke="#8b8e91" />
            <path d="M8 9h8M8 14h8M8 19h8" stroke="#8b8e91" strokeWidth="1.500" />
            <circle cx="5" cy="9" r="1.500" fill="#8b8e91" />
            <circle cx="5" cy="14" r="1.500" fill="#8b8e91" />
            <circle cx="5" cy="19" r="1.500" fill="#8b8e91" />
          </Icon>
          <Caret />
        </button>
        <button type="button" aria-label="隐藏" className="ml-4">
          <Icon size={26}>
            <path d="M1 2h5v5H1zM1 10h5v5H1zM1 19h5v5H1zM6 12h5M11 9h6v6h-6M12 1h10v7" stroke="#9b9ea0" />
            <path d="M12 20c4-5 9-5 13 0-4 4-9 4-13 0z" stroke="#33363a" strokeWidth="1.500" />
            <circle cx="18.500" cy="19.500" r="2" fill="#33363a" />
            <path d="M12 12l13 12" stroke="#33363a" strokeWidth="1.500" />
          </Icon>
        </button>
      </div>

      <div className="flex h-[34px] shrink-0 items-center pl-3.5">
        <Icon size={20}>
          <path d="M0 1h20l-7 8v10H8V9z" fill="#a3a6a8" />
          <path d="M4 3h12l-5 5v9h-1V8z" fill="#f3f5f6" />
        </Icon>
        <div className="ml-1 flex h-[34px] w-[291px] items-center border border-[#a9b1ac] bg-white">
          <input type="text" aria-label="过滤模型树" className="h-full min-w-0 flex-1 px-2 text-[15px] outline-none" />
          <button type="button" aria-label="清除" className="pr-1.5">
            <Icon size={11}>
              <path d="M1 1l9 9M10 1l-9 9" stroke="#9a9da0" strokeWidth="1.500" />
            </Icon>
          </button>
        </div>
        <button type="button" aria-label="过滤选项" className="ml-[7px]">
          <Caret />
        </button>
        <button type="button" aria-label="添加" className="ml-3">
          <Icon size={15}>
            <path d="M7.500 0v15M0 7.500h15" stroke="#a0a3a5" strokeWidth="4" />
          </Icon>
        </button>
      </div>

      <div className="mx-2.5 mt-[3px] mr-[5px]">
        <table className="w-full table-fixed border-collapse">
          <colgroup>
            <col className="w-[207px]" />
            <col className="w-[128px]" />
            <col />
          </colgroup>
          <thead>
            <tr className="h-[29px] border-b border-[#d5d8da] text-left text-[15px] text-[#222426]">
              <th className="p-0" aria-label="名称" />
              <th className="border-l border-[#d5d8da] p-0 pl-1.5 align-bottom font-normal">特征标识</th>
              <th className="border-l border-[#d5d8da] p-0 pl-[3px] align-bottom font-normal">
                <div className="flex items-center whitespace-nowrap">
                  <Icon size={17} box={18}>
                    <path d="M3 3h12v12H3z" fill="#fbe6bb" stroke="#b08b45" strokeWidth="2" />
                    <path d="M0 0h5v4H0zM13 0h5v4h-5zM0 14h5v4H0zM13 14h5v4h-5z" fill="#d9b36c" />
                    <path d="M7 6h5v6H7z" fill="#fff" stroke="#8a8d90" />
                  </Icon>
                  属
                </div>
              </th>
            </tr>
          </thead>
          <tbody>
            {tree.map((item, index) => (
              <TreeRow key={index} item={item} />
            ))}
          </tbody>
        </table>
        <div className="mt-1.5 h-[3px] bg-[#67bd45]" />
      </div>

      <div className="mt-auto mr-[5px] mb-[7px] ml-2.5 flex">
        <div className="flex w-[208px]">
          <Scrollbar />
        </div>
        <Scrollbar thumb />
      </div>
    </aside>
  );
}

/* ---------- cabinet model ---------- */

function Rail({ x, y, length, slots }: { x: number; y: number; length: number; slots: number }) {
  const drop = length * 0.055;
  return (
    <g strokeWidth=".8">
      <path
        d={`M${x} ${y}l${length} ${drop}l2 18l${-length} ${-drop}z`}
        fill="#8b9aaa"
        stroke="#23282d"
        strokeWidth="1.200"
      />
      <path
        d={`M${x} ${y + 3}l${length} ${drop}M${x + 1} ${y + 15}l${length} ${drop}`}
        stroke="#5c6a77"
      />
      {Array.from({ length: slots }, (_, i) => (
        <rect
          key={i}
          x={x + 6 + i * 14.25}
          y={y + 8 + i * 14.25 * 0.055}
          width="8.500"
          height="3"
          rx="1.500"
          fill="#7d8a97"
          stroke="#2f363d"
        />
      ))}
    </g>
  );
}

const floorSlots = [
  [788, 618, 41, 8],
  [867, 618, 17, 4],
  [923, 621, 17, 4],
  [980, 624, 17, 4],
  [1037, 627, 17, 4],
  [1159, 638, 41, 8],
  [1237, 638, 17, 4],
  [1294, 641, 17, 4],
  [1351, 644, 17, 4],
  [1397, 647, 5, 3],
];

function Cabinet() {
  return (
    <svg
      viewBox="395 178 1520 768"
      preserveAspectRatio="xMinYMin meet"
      className="block h-full w-full"
      fill="none"
      stroke="#141516"
      role="img"
      aria-label="机柜模型"
    >
      {/* right outer wall */}
      <path d="M1380 326l61-75 46 384-24 27-63-20z" fill="#48494b" />
      {/* front frame */}
      <path d="M640 286l740 40 28 386-714-40-30-372-13-2z" fill="#7f8082" stroke="none" />
      <path d="M640 286l3 34 22-21-14-1z" fill="#7b7c7e" strokeWidth=".8" />
      {/* back panel */}
      <path d="M713 308l646 34 38 290-650-36z" fill="#828385" strokeWidth=".8" />
      {/* left inner wall */}
      <path d="M668 304l45 4 34 288-39 48z" fill="#48494b" />
      <path d="M713 308l34 288" strokeWidth="1.500" />
      <path d="M668 304l26 2 7 49-23 27-10-60z" fill="#fff" />
      {/* floor */}
      <path d="M747 596l647 35 4 53-688-37z" fill="#88898b" strokeWidth=".8" />
      <path d="M747 596l647 35" strokeWidth="1.500" />
      {/* top */}
      <path d="M701 209l740 42-61 75-740-40z" fill="#88898b" />
      <path d="M1441 251l-61 75" strokeWidth="2" />
      <path d="M642 288l738 40" stroke="#b9babb" />
      <path d="M651 298l719 38M640 286l11 12M1380 326l-10 10" />
      <path d="M668 304l691 38" strokeWidth=".8" />
      {/* bottom lip */}
      <path d="M710 647l688 37M710 656l691 37M694 672l714 40" />
      <path d="M705 662l698 39" strokeWidth=".8" />
      <path d="M705 664l698 39" stroke="#b9babb" />

      {floorSlots.map(([cx, cy, rx, ry]) => (
        <rect
          key={cx}
          x={cx - rx}
          y={cy - ry}
          width={rx * 2}
          height={ry * 2}
          rx={ry * 2}
          ry={ry}
          fill="#fff"
          transform={`rotate(2 ${cx} ${cy})`}
        />
      ))}
      <circle cx="761" cy="581" r="3" fill="#fff" />
      <circle cx="776" cy="565" r="2" fill="#fff" />

      <Rail x={765} y={541} length={327} slots={23} />
      <Rail x={1108} y={560} length={286} slots={20} />

      {/* left door */}
      <path d="M665 298L502 454l41 358 10 1 156-158-41-357z" fill="#828385" />
      <path d="M660 304L512 457l41 344 147-149z" fill="#48494b" strokeWidth="1.200" />
      <path d="M502 454l10 3 41 344v12M700 652l9 3M660 304l8-6" />
      <path d="M655 309l43 342L555 796M658 308l40 340" stroke="#2a2b2c" strokeWidth=".8" />
      <path d="M502 455h10" strokeWidth="2" />

      {/* right door */}
      <path d="M1359 338l10-2 72 145 43 358-11 2-72-147z" fill="#77787a" />
      <path d="M1359 338l15 28 37 331-10-3z" fill="#7a7b7d" strokeWidth=".8" />
      <path d="M1374 366l57 118 38 326-58-113z" fill="#707173" strokeWidth=".8" />
      <path d="M1359 338l10-2 72 145-10 3z" fill="#858688" />
      <path d="M1431 484l10-3 43 358-11 2z" fill="#6c6d6f" />
      <path d="M1401 694l10 3 58 113 4 31z" fill="#858688" />
      <path d="M1378 376l35 322" stroke="#333" strokeWidth=".8" />
      <path d="M1369 336l12-10 4 40" strokeWidth=".8" />
      <path d="M1431 484l10-3" strokeWidth="2" />
      <path d="M1461 622l5 44" stroke="#b9babb" strokeWidth="1.500" strokeDasharray="7 2" />

      {/* pointer highlight */}
      <circle cx="967" cy="348" r="28" fill="#e0e022" stroke="none" />
      <path d="M968 347v17l4-4 3 7 3-1-3-7h5z" fill="#000" stroke="#fff" strokeWidth=".6" />
    </svg>
  );
}

function Viewport() {
  return (
    <main className="relative min-w-0 flex-1 overflow-hidden bg-white">
      <Cabinet />
      <div className="absolute top-[7px] left-[502px] flex h-[38px] items-center border border-[#8f9294] bg-[#f8f9fb] px-px">
        {view.map((tool) => (
          <button
            key={tool.name}
            type="button"
            aria-label={tool.name}
            disabled={tool.disabled}
            className={clsx(
              "grid h-[29px] w-8 place-items-center",
              tool.active && "border border-[#b6b9bb] bg-[#dbddde]",
            )}
          >
            <Icon size={22}>{tool.icon}</Icon>
          </button>
        ))}
      </div>
      <p className="absolute top-[677px] left-2 text-[7px] leading-[10px] text-[#222]">简化表示：默认表示</p>
    </main>
  );
}

/* ---------- status bar ---------- */

function StatusBar() {
  return (
    <footer className="flex h-12 shrink-0 items-center border-t border-[#b3b6b8] bg-[#f6f8f8] pl-[7px]">
      <button
        type="button"
        aria-label="导航器"
        className="mt-1 grid h-[30px] w-[26px] place-items-center border border-[#b0b2b4] bg-[#dddfe0]"
      >
        <Icon size={21}>
          <path d="M1 1h18v4H1z" fill="#fff" stroke="#85888b" />
          <path d="M1 5h18v15H1z" fill="#f6f8f8" stroke="#85888b" />
          <path d="M1 7h6v13H1z" fill="#cfe9f6" stroke="#5c8ca3" />
          <ellipse cx="15" cy="17" rx="5" ry="3" fill="#fff" stroke="#3d4043" strokeWidth="1.500" />
          <circle cx="15" cy="17" r="2" fill="#3d4043" />
        </Icon>
      </button>
      <button type="button" aria-label="浏览器" className="mt-1 ml-1.5">
        <Icon size={22}>
          <circle cx="11" cy="11" r="9" fill="#3d9fd8" />
          <path d="M6 6c3-2 6-1 7 1s-3 3-2 5-3 4-4 1-3-4-1-7zM14 12c3-1 4 0 4 2l-3 4z" fill="#bfe6f8" />
          <path d="M4 20C-1 19 3 10 9 5S21 0 20 5s-5 9-9 12" stroke="#77797c" strokeWidth="1.500" />
        </Icon>
      </button>
      <button
        type="button"
        aria-label="全屏"
        className="mt-1 ml-2 h-5 w-5 border border-[#2d6f95] bg-linear-to-b from-white to-[#c8dcec]"
      />
      <div className="mt-1 ml-3 h-[30px] w-px bg-[#a9acae]" />
      <p className="mb-2 ml-2 flex items-center gap-1.5 text-[14px]">
        <span className="h-[6px] w-[6px] rounded-full bg-[#136080]" />
        00_ASM_1 已保存。
      </p>

      <div className="ml-auto flex items-center">
        <div className="h-[36px] w-px bg-[#a9acae]" />
        <button type="button" aria-label="重新生成状态" className="px-1">
          <Icon size={20}>
            <path d="M1 13l2-2h6v6l-2 3H1z" fill="#eaf6fb" stroke="#3a86ad" />
            <path d="M6 9c0-4 1-5 4-5V1l5 4-5 4V6.500c-1 0-2 1-2 3z" fill="#1c6a8b" />
            <path d="M19 5c1 4-1 6-4 6v2l-4-4 4-3v2c1 0 2-1 2-3z" fill="#1c6a8b" />
          </Icon>
        </button>
        <div className="h-[36px] w-px bg-[#a9acae]" />
        <div className="mx-0.5 mb-1 flex h-[30px] border border-[#c3c6c8]">
          <button type="button" aria-label="查找" className="grid w-8 place-items-center">
            <Icon size={21}>
              <path d="M4 1h4v3l2 3v12H1V9zM17 1h-4v3l-2 3v12h9V9z" fill="#4a4d50" />
              <path d="M3 8v10M13 8v10" stroke="#8e9194" strokeWidth="1.500" />
              <path d="M9 7h3v5H9z" fill="#222" />
            </Icon>
          </button>
          <button
            type="button"
            aria-label="查找选项"
            className="grid w-[17px] place-items-center border-l border-[#c3c6c8]"
          >
            <Caret />
          </button>
        </div>
        <div className="h-[36px] w-px bg-[#a9acae]" />
        <button
          type="button"
          aria-label="选择模式"
          className="ml-0.5 grid h-9 w-[49px] place-items-center border border-[#b0b3b5]"
        >
          <Icon size={24}>
            <path d="M1 6l5-5h17v17l-5 5H1z" fill="#f3f4f4" stroke="#5a5d60" strokeWidth="1.500" />
            <path d="M1 6h17v17M18 6l5-5" stroke="#5a5d60" strokeWidth="1.500" />
            <path d="M5 10h10v9H5z" fill="#f8d9a0" stroke="#c69f57" />
            <Cube x={7} y={9} w={8} h={8} d={2} />
          </Icon>
        </button>
        <div className="relative ml-[120px] flex h-7 w-[217px] border border-[#9a9d9f]">
          <select aria-label="选择过滤器" className="w-full appearance-none bg-transparent pl-2 text-[15px] outline-none">
            <option>我的过滤器</option>
          </select>
          <span className="pointer-events-none absolute inset-y-0 right-0 grid w-5 place-items-center border-l border-[#9a9d9f]">
            <Caret />
          </span>
        </div>
        <div className="flex h-9 w-[21px] items-end justify-end pr-0.5">
          <Icon size={14}>
            <path d="M1 13L13 1M6 13l7-7M10 13l3-3" stroke="#c5c8c9" strokeWidth="2" />
          </Icon>
        </div>
      </div>
    </footer>
  );
}

export default function App() {
  return (
    <div className="flex h-screen flex-col overflow-hidden bg-[#9fa3a4] font-['Noto_Sans','Noto_Sans_CJK_SC',sans-serif] text-[#4a4e52]">
      <div className="relative mx-[5px] flex min-h-0 flex-1 flex-col">
        <div className="flex h-[7px] shrink-0 bg-[#dadde0]">
          <div className="ml-[392px] w-px bg-[#a9acaf]" />
        </div>
        <TabBar />
        <Ribbon />
        <div className="flex min-h-0 flex-1">
          <ModelTree />
          <Viewport />
        </div>
        <StatusBar />

        {/* floating blank windows */}
        <div className="absolute top-[797px] right-0 h-[94px] w-[127px] bg-white shadow-[-1px_2px_6px_rgba(0,0,0,0.5)]" />
        <div className="absolute top-[178px] -right-[5px] flex h-[616px] w-[364px] items-end justify-end bg-white shadow-[-1px_2px_6px_rgba(0,0,0,0.5)]">
          <div className="mr-0.5 h-[26px] w-[155px] border-l-2 border-[#8cc8ee] bg-linear-to-b from-[#eff1f3] to-[#e3e5e7]" />
        </div>
      </div>
      <div className="h-1 shrink-0" />
      <div className="h-[3px] shrink-0 border-t border-[#3d6f9e] bg-linear-to-r from-[#bfe3f5] to-[#dcd6f0]" />
    </div>
  );
}
